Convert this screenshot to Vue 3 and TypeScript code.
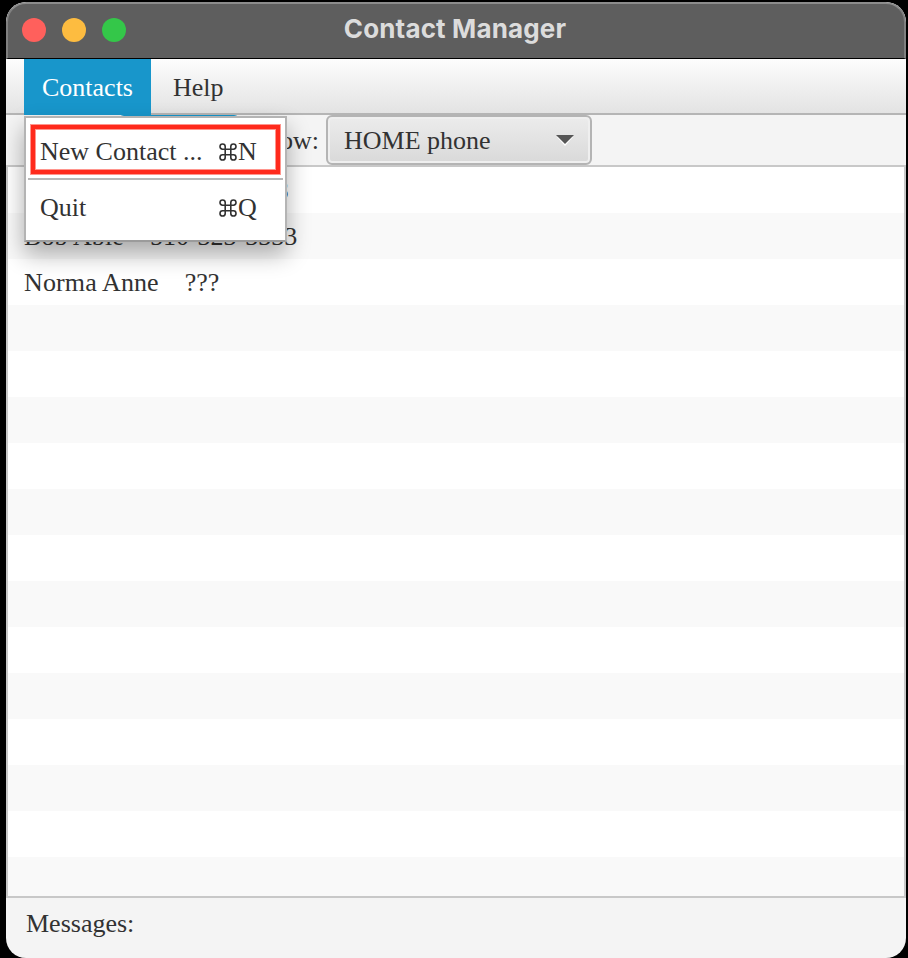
<script setup lang="ts">
interface Contact { name: string; phone: string }
interface MenuEntry { label: string; key: string }

const menus: string[] = ['Contacts', 'Help']
const rows: (Contact | null)[] = [
  { name: 'Joe Able', phone: '510-323-3338' },
  { name: 'Bob Able', phone: '510-323-3333' },
  { name: 'Norma Anne', phone: '???' },
  ...Array<null>(13).fill(null),
]
const entries: MenuEntry[] = [
  { label: 'New Contact ...', key: 'N' },
  { label: 'Quit', key: 'Q' },
]
</script>

<template>
  <div class="desktop">
    <div class="window">
      <header class="titlebar">
        <div class="lights"><i class="red" /><i class="yellow" /><i class="green" /></div>
        <h1>Contact Manager</h1>
      </header>
      <nav class="menubar">
        <div v-for="(m, i) in menus" :key="m" class="menu" :class="{ open: i === 0 }">
          <span>{{ m }}</span>
          <div v-if="i === 0" class="popup">
            <template v-for="(e, j) in entries" :key="e.key">
              <div v-if="j > 0" class="sep" />
              <div class="entry" :class="{ marked: j === 0 }">
                <span class="label">{{ e.label }}</span>
                <svg class="cmd" width="18" height="18" viewBox="0 0 18 18" fill="none" stroke="#323232" stroke-width="1.6">
                  <path d="M6.2 6.2V3.6A2.6 2.6 0 1 0 3.6 6.2H14.4A2.6 2.6 0 1 0 11.8 3.6V14.4A2.6 2.6 0 1 0 14.4 11.8H3.6A2.6 2.6 0 1 0 6.2 14.4Z" />
                </svg>
                <span>{{ e.key }}</span>
              </div>
            </template>
          </div>
        </div>
      </nav>
      <div class="toolbar">
        <div class="add" />
        <span class="show">Show:</span>
        <div class="combo">
          <span>HOME phone</span>
          <svg width="18" height="12" viewBox="0 0 18 12"><path d="M1 2h16L9 11z" fill="#fff" /><path d="M0 0h18L9 9z" fill="#565656" /></svg>
        </div>
      </div>
      <ul class="list">
        <li v-for="(r, i) in rows" :key="i">
          <template v-if="r"><span class="name">{{ r.name }}</span><span>{{ r.phone }}</span></template>
        </li>
      </ul>
      <footer class="status">Messages:</footer>
    </div>
  </div>
</template>

<style>
body { margin: 0; background: #000; }
</style>
<style scoped>
* { box-sizing: border-box; }
.desktop { width: 908px; height: 958px; padding: 2px 2px 0 6px; background: #000; overflow: hidden; }
.window { width: 900px; height: 956px; display: flex; flex-direction: column; background: #f4f4f4; border-radius: 20px; overflow: hidden; font: 26px/30px "Liberation Serif", "Times New Roman", serif; color: #323232; }
.titlebar { flex: none; height: 57px; display: grid; grid-template-columns: 1fr auto 1fr; align-items: center; padding-bottom: 2px; background: #5e5e5e; border: 2px solid #808080; border-bottom: 1px solid #000; border-top-color: #8c8c8c; border-radius: 20px 20px 0 0; }
.lights { display: flex; gap: 16px; padding-left: 14px; }
.lights i { width: 24px; height: 24px; border-radius: 50%; }
.red { background: #ff605c; }
.yellow { background: #fdbc40; }
.green { background: #34c749; }
h1 { margin: 0; padding: 0 2px 2px 0; font: 700 26px/30px Inter, "Liberation Sans", sans-serif; letter-spacing: .15px; color: #dcdcdc; }
.menubar { flex: none; height: 56px; display: flex; padding-left: 18px; background: linear-gradient(#fdfdfd, #e3e3e3); border-bottom: 2px solid #b5b5b5; }
.menu { position: relative; height: 54px; padding: 14px 22px 0; }
.menu.open { height: 56px; width: 127px; padding: 14px 18px 0; color: #fff; background: #1896cb; }
.popup { position: absolute; z-index: 2; left: 0; top: 57px; width: 263px; height: 126px; padding: 7px 2px 0; background: #fff; border: 2px solid #b4b4b4; border-bottom-color: #9b9b9b; box-shadow: 0 12px 22px rgba(0, 0, 0, .32); color: #323232; }
.entry { display: flex; width: 249px; height: 49px; margin-left: 3px; padding: 12px 9px 0; white-space: nowrap; }
.entry.marked { border: 4px solid #ff2a1c; padding: 8px 5px 0; box-shadow: 0 0 0 1px #ff958d, inset 0 0 0 1px #ff958d; }
.label { flex: none; width: 179px; }
.cmd { flex: none; margin: 6px 1px 0 0; }
.sep { height: 2px; margin: 4px 0 1px; background: #b8b8b8; }
.toolbar { flex: none; height: 50px; display: flex; align-items: flex-start; padding-left: 112px; }
.add { width: 122px; height: 50px; border: 2px solid #1896cb; border-radius: 6px; background: #e4e4e4; }
.show { width: 79px; padding-top: 11px; text-align: right; }
.combo { width: 266px; height: 50px; margin-left: 7px; padding: 2px 16px 0; display: flex; align-items: center; justify-content: space-between; border: 2px solid #b4b4b4; border-radius: 6px; background: linear-gradient(#ececec, #d9d9d9); box-shadow: inset 0 0 0 2px #efefef; }
.list { flex: none; height: 733px; margin: 0; padding: 0; list-style: none; overflow: hidden; border: 2px solid #c8c8c8; background: #fff; }
li { height: 46px; padding: 9px 16px; display: flex; gap: 26px; }
.name { letter-spacing: .12px; }
li:nth-child(even) { background: #f9f9f9; }
.status { padding: 11px 20px; }
</style>
